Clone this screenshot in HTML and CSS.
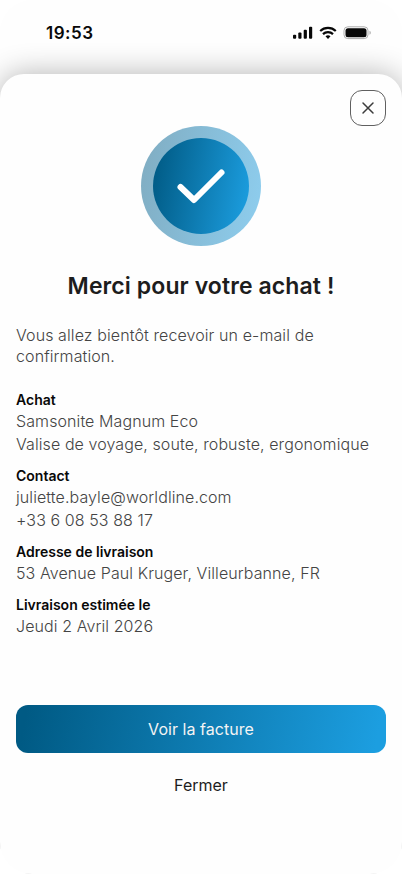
FILE: index.html
```html
<!DOCTYPE html>
<html lang="fr">
<head>
<meta charset="utf-8">
<meta name="viewport" content="width=device-width, initial-scale=1">
<title>Merci pour votre achat</title>
<link rel="stylesheet" href="styles.css">
</head>
<body>
<div class="screen">
  <header class="status">
    <span class="time">19:53</span>
    <svg class="status-icons" width="80" height="16" viewBox="0 0 80 16">
      <g fill="#080808">
        <rect x="1" y="8.8" width="3.2" height="4" rx="1"/>
        <rect x="6.3" y="6.6" width="3.2" height="6.2" rx="1"/>
        <rect x="11.7" y="3.7" width="3.2" height="9.1" rx="1"/>
        <rect x="17" y="0.8" width="3.2" height="12" rx="1"/>
        <path d="M36 12.9l2.5-2.6a3.7 3.7 0 0 0-5 0z"/>
      </g>
      <g fill="none" stroke="#080808" stroke-width="2.2">
        <path d="M28.2 5a11.3 11.3 0 0 1 15.6 0"/>
        <path d="M31 8.1a7.2 7.2 0 0 1 10 0"/>
      </g>
      <rect x="52" y="0.8" width="24" height="11.8" rx="3.8" fill="none" stroke="#adadad"/>
      <rect x="53.5" y="2.2" width="21" height="9" rx="2.5" fill="#080808"/>
      <path d="M77.5 4.8v4c1.8-.8 1.8-3.2 0-4z" fill="#adadad"/>
    </svg>
  </header>
  <main class="sheet">
    <button class="close" aria-label="Fermer la fenêtre">
      <svg width="14" height="14" viewBox="0 0 14 14" fill="none" stroke="#3c3c3c" stroke-width="1.5" stroke-linecap="round"><path d="M2 2l10 10M12 2L2 12"/></svg>
    </button>
    <div class="badge">
      <div class="disc">
        <svg width="96" height="96" viewBox="0 0 96 96" fill="none" stroke="#fff" stroke-width="6" stroke-linecap="round" stroke-linejoin="round"><path d="M27.5 49L41 62L68.5 34.5"/></svg>
      </div>
    </div>
    <h1>Merci pour votre achat !</h1>
    <p class="intro">Vous allez bientôt recevoir un e-mail de confirmation.</p>
    <dl class="details">
      <div><dt>Achat</dt><dd>Samsonite Magnum Eco</dd><dd>Valise de voyage, soute, robuste, ergonomique</dd></div>
      <div><dt>Contact</dt><dd>juliette.bayle@worldline.com</dd><dd>+33 6 08 53 88 17</dd></div>
      <div><dt>Adresse de livraison</dt><dd>53 Avenue Paul Kruger, Villeurbanne, FR</dd></div>
      <div><dt>Livraison estimée le</dt><dd>Jeudi 2 Avril 2026</dd></div>
    </dl>
    <div class="actions">
      <button class="primary">Voir la facture</button>
      <button class="secondary">Fermer</button>
    </div>
  </main>
</div>
</body>
</html>
```
FILE: styles.css
```css
* {
  box-sizing: border-box;
}

body {
  margin: 0;
  background: #fff;
  font-family: Inter, sans-serif;
}

button {
  border: 0;
  padding: 0;
  background: none;
  font: inherit;
}

.screen {
  height: 874px;
  display: flex;
  flex-direction: column;
  overflow: hidden;
  border-radius: 32px;
  background: #fefefe;
}

.status {
  height: 74px;
  flex: none;
  display: flex;
  justify-content: space-between;
  padding: 22px 30px 0 46px;
}

.time {
  font-size: 17px;
  line-height: 22px;
  font-weight: 600;
  letter-spacing: 0.5px;
  color: #080808;
}

.status-icons {
  margin-top: 4px;
}

.sheet {
  position: relative;
  flex: 1;
  display: flex;
  flex-direction: column;
  padding: 52px 16px 0;
  border-radius: 24px 24px 0 0;
  background: #fefefe;
  box-shadow: 0 0 30px rgba(0, 0, 0, 0.3);
}

.close {
  position: absolute;
  top: 16px;
  right: 16px;
  width: 36px;
  height: 36px;
  display: grid;
  place-items: center;
  border: 1px solid #606060;
  border-radius: 12px;
}

.badge {
  align-self: center;
  width: 120px;
  height: 120px;
  padding: 12px;
  border-radius: 50%;
  background: linear-gradient(100deg, #80acc1, #8eceef);
}

.disc {
  width: 96px;
  height: 96px;
  border-radius: 50%;
  background: linear-gradient(100deg, #005a84 3%, #1c9ee0 97%);
}

h1 {
  margin: 24px 0 0;
  text-align: center;
  font-size: 23px;
  line-height: 32px;
  font-weight: 600;
  letter-spacing: 0.1px;
  white-space: nowrap;
  color: #1d1d1d;
}

.intro {
  margin: 23px 0 0;
  font-size: 16px;
  line-height: 21px;
  font-weight: 300;
  letter-spacing: 0.1px;
  color: #444;
}

.details {
  margin: 22px 0 0;
  display: flex;
  flex-direction: column;
  gap: 9px;
}

dt {
  font-size: 14px;
  line-height: 21px;
  font-weight: 600;
  color: #080808;
}

dd {
  margin: 0;
  font-size: 16px;
  line-height: 23px;
  font-weight: 300;
  letter-spacing: 0.09px;
  color: #444;
}

.actions {
  margin-top: 67px;
  display: flex;
  flex-direction: column;
  gap: 8px;
}

.primary,
.secondary {
  height: 48px;
  font-size: 16px;
  border-radius: 12px;
}

.primary {
  color: #f4f4f4;
  letter-spacing: 0.04px;
  background: linear-gradient(100deg, #005a84 3%, #1c9ee0 97%);
}

.secondary {
  color: #1d1d1d;
}
```
